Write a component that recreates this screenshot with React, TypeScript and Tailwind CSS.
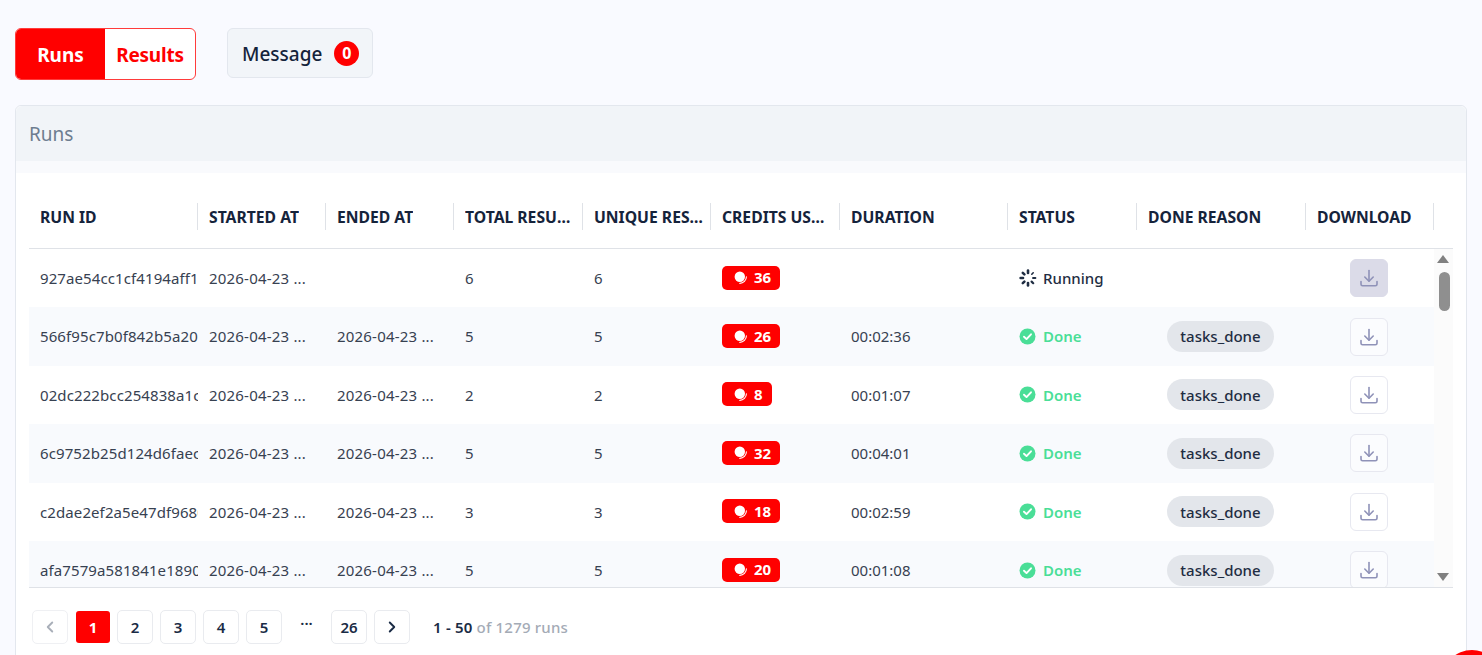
import { ChevronLeft, ChevronRight } from "lucide-react";

type Run = {
  id: string;
  started: string;
  ended?: string;
  total: number;
  unique: number;
  credits: number;
  duration?: string;
  running?: boolean;
};

const runs: Run[] = [
  { id: "927ae54cc1cf4194aff1", started: "2026-04-23 ...", total: 6, unique: 6, credits: 36, running: true },
  { id: "566f95c7b0f842b5a20", started: "2026-04-23 ...", ended: "2026-04-23 ...", total: 5, unique: 5, credits: 26, duration: "00:02:36" },
  { id: "02dc222bcc254838a1c", started: "2026-04-23 ...", ended: "2026-04-23 ...", total: 2, unique: 2, credits: 8, duration: "00:01:07" },
  { id: "6c9752b25d124d6faec", started: "2026-04-23 ...", ended: "2026-04-23 ...", total: 5, unique: 5, credits: 32, duration: "00:04:01" },
  { id: "c2dae2ef2a5e47df9680", started: "2026-04-23 ...", ended: "2026-04-23 ...", total: 3, unique: 3, credits: 18, duration: "00:02:59" },
  { id: "afa7579a581841e1890", started: "2026-04-23 ...", ended: "2026-04-23 ...", total: 5, unique: 5, credits: 20, duration: "00:01:08" },
];

const columns = [
  { label: "RUN ID", w: "w-[169px] pr-[6px]" },
  { label: "STARTED AT", w: "w-[128px] pr-[6px]" },
  { label: "ENDED AT", w: "w-[128px] pr-[6px]" },
  { label: "TOTAL RESULTS", w: "w-[129px] pr-[6px]" },
  { label: "UNIQUE RESULTS", w: "w-[128px] pr-[5.5px]" },
  { label: "CREDITS USED", w: "w-[129px] pr-[10px]" },
  { label: "DURATION", w: "w-[168px] pr-[6px]" },
  { label: "STATUS", w: "w-[129px] pr-[6px]" },
  { label: "DONE REASON", w: "w-[169px] pr-[6px]" },
  { label: "DOWNLOAD", w: "w-[128px] pr-[6px]" },
];

function CoinIcon() {
  return (
    <svg width="15" height="15" viewBox="0 0 15 15" className="shrink-0">
      <circle cx="6.8" cy="6.8" r="5.2" fill="#fff" />
      <path d="M13.4 6.8A6.6 6.6 0 0 1 6.8 13.4" fill="none" stroke="#fff" strokeWidth="1.1" strokeLinecap="round" />
    </svg>
  );
}

function SpinnerIcon() {
  return (
    <svg width="18" height="18" viewBox="0 0 18 18" fill="none" stroke="#1f2d42" strokeLinecap="round">
      <path d="M9 1.6v2.4" strokeWidth="2.6" />
      <path d="M14.2 3.8l-1.4 1.4" strokeWidth="1.6" />
      <path d="M16.4 9h-2.4" strokeWidth="1.9" />
      <path d="M14.2 14.2l-1.6-1.6" strokeWidth="2.2" />
      <path d="M9 16.4V14" strokeWidth="2.6" />
      <path d="M3.8 14.2l1.6-1.6" strokeWidth="2.6" />
      <path d="M1.6 9H4" strokeWidth="2.6" />
      <path d="M3.8 3.8l1.6 1.6" strokeWidth="2.6" />
    </svg>
  );
}

function CheckIcon() {
  return (
    <svg width="17" height="17" viewBox="0 0 17 17" className="shrink-0">
      <circle cx="8.5" cy="8.5" r="8" fill="#4ade97" />
      <path d="M5 8.7l2.5 2.4L12 6.3" fill="none" stroke="#fff" strokeWidth="1.9" strokeLinecap="round" strokeLinejoin="round" />
    </svg>
  );
}

function DownloadIcon() {
  return (
    <svg width="20" height="20" viewBox="0 0 20 20" fill="none" stroke="#8f92b8" strokeWidth="1.6" strokeLinecap="round" strokeLinejoin="round">
      <path d="M10 2.5v10.5" />
      <path d="M5.8 9l4.2 4.2L14.2 9" />
      <path d="M2 13.5v2.7a1.6 1.6 0 0 0 1.6 1.6h12.8a1.6 1.6 0 0 0 1.6-1.6v-2.7" />
    </svg>
  );
}

function PageButton({ children, active }: { children: React.ReactNode; active?: boolean }) {
  return (
    <button
      className={
        active
          ? "w-[34px] h-[32px] flex items-center justify-center rounded-[3px] bg-[#ff0000] text-white text-[15px] font-bold"
          : "w-[36px] h-[34px] flex items-center justify-center rounded-[5px] border border-[#e9ebef] bg-white text-[#1a2b45] text-[15px] font-semibold"
      }
    >
      {children}
    </button>
  );
}

function RunRow({ run, index }: { run: Run; index: number }) {
  return (
    <div className={`flex items-center h-[58.4px] shrink-0 text-[15px] text-[#374151] ${index % 2 === 1 ? "bg-[#f8fafd]" : "bg-white"}`}>
      <div className="w-[169px] pl-[11px] overflow-hidden whitespace-nowrap tracking-[0.1px]">{run.id}</div>
      <div className="w-[128px] pl-[11px] tracking-[0.2px]">{run.started}</div>
      <div className="w-[128px] pl-[11px] tracking-[0.2px]">{run.ended}</div>
      <div className="w-[129px] pl-[11px]">{run.total}</div>
      <div className="w-[128px] pl-[11px]">{run.unique}</div>
      <div className="w-[129px] pl-[11px]">
        <span className="inline-flex items-center gap-[6px] h-6 pl-[11px] pr-[9px] rounded-[5px] bg-[#ff0000] text-white font-bold">
          <CoinIcon />
          {run.credits}
        </span>
      </div>
      <div className="w-[168px] pl-[11px]">{run.duration}</div>
      <div className="w-[129px] pl-[11px]">
        {run.running ? (
          <span className="flex items-center gap-[6px] text-[15px] font-medium text-[#1f2d42]">
            <SpinnerIcon />
            Running
          </span>
        ) : (
          <span className="flex items-center gap-[7px] text-[15px] font-semibold text-[#4ade97]">
            <CheckIcon />
            Done
          </span>
        )}
      </div>
      <div className="w-[169px] flex justify-center pr-[2px]">
        {!run.running && (
          <span className="h-[31px] px-[13px] flex items-center rounded-full bg-[#e3e6eb] text-[15px] font-medium text-[#1f2d42]">tasks_done</span>
        )}
      </div>
      <div className="w-[128px] flex justify-center pr-[2px]">
        <button className={`w-[38px] h-[38px] flex items-center justify-center rounded-[6px] border ${run.running ? "bg-[#dbdbe8] border-[#dbdbe8]" : "bg-white/40 border-[#e7e8f0]"}`}>
          <DownloadIcon />
        </button>
      </div>
    </div>
  );
}

export default function App() {
  return (
    <div className="relative h-[655px] overflow-hidden bg-[#f9faff] px-[15px] pt-7 font-['Noto_Sans',sans-serif]">
      <div className="flex items-start">
        <div className="flex h-[52px] w-[181px] rounded-[6px] border border-[#ff3b3b] bg-white overflow-hidden text-[19px] font-bold">
          <div className="w-[89px] pt-[2px] flex items-center justify-center bg-[#ff0000] text-white">Runs</div>
          <div className="flex-1 pt-[2px] flex items-center justify-center text-[#ff0000] tracking-[-0.2px]">Results</div>
        </div>
        <div className="ml-[31px] flex items-center h-[50px] w-[146px] pl-[14px] gap-[12px] rounded-[6px] border border-[#e3e7ee] bg-[#f2f5f9] text-[#15233b] text-[19px] font-medium">
          <span className="pt-[2px]">Message</span>
          <span className="w-[25px] h-[25px] flex items-center justify-center rounded-full bg-[#ff0000] text-white text-base font-bold">0</span>
        </div>
      </div>

      <div className="mt-[25px] h-[600px] rounded-t-[6px] border border-[#e3e7ee] bg-white">
        <div className="h-[55px] pt-[2px] flex items-center pl-[13px] bg-[#f1f4f8] text-[19px] text-[#6d7d90] rounded-t-[6px]">Runs</div>
        <div className="h-3 bg-[#f9fafd]" />
        <div className="mx-[13px]">
          <div className="flex items-center h-[76px] border-b border-[#dfe2e7]">
            {columns.map((col) => (
              <div key={col.label} className={`${col.w} h-[27px] pl-[11px] pt-[2px] flex items-center border-r border-[#dfe2e7] mt-[12px]`}>
                <span className="truncate text-[15.7px] font-bold text-[#15233b]">{col.label}</span>
              </div>
            ))}
          </div>
          <div className="flex h-[339px] border-b border-[#dfe2e7]">
            <div className="w-[1405px] flex flex-col overflow-hidden">
              {runs.map((run, i) => (
                <RunRow key={run.id} run={run} index={i} />
              ))}
            </div>
            <div className="relative flex-1 bg-[#fbfbfb]">
              <svg width="14" height="10" viewBox="0 0 14 10" className="absolute left-[2px] top-[5px]">
                <path d="M7 1l6 8H1z" fill="#808080" />
              </svg>
              <div className="absolute left-[4.5px] top-[23px] w-[11px] h-[39px] rounded-full bg-[#8f8f8f]" />
              <svg width="14" height="10" viewBox="0 0 14 10" className="absolute left-[2px] bottom-[5px]">
                <path d="M7 9L1 1h12z" fill="#808080" />
              </svg>
            </div>
          </div>
          <div className="flex items-center h-[80px] pl-[3px] pb-[2px] text-[15px]">
            <button className="w-[36px] h-[34px] flex items-center justify-center rounded-[5px] border border-[#eff0f3] bg-white">
              <ChevronLeft size={18} strokeWidth={2.5} className="text-[#a9afb9]" />
            </button>
            <div className="ml-[8px]"><PageButton active>1</PageButton></div>
            <div className="ml-[7px]"><PageButton>2</PageButton></div>
            <div className="ml-[7px]"><PageButton>3</PageButton></div>
            <div className="ml-[7px]"><PageButton>4</PageButton></div>
            <div className="ml-[7px]"><PageButton>5</PageButton></div>
            <span className="w-[49px] text-center text-[#1a2b45] font-semibold -mt-2">···</span>
            <PageButton>26</PageButton>
            <button className="ml-[7px] w-[36px] h-[34px] flex items-center justify-center rounded-[5px] border border-[#e9ebef] bg-white">
              <ChevronRight size={18} strokeWidth={2.5} className="text-[#1a2b45]" />
            </button>
            <span className="ml-[23px] font-semibold text-[#1a2b45] tracking-[0.2px]">1 - 50</span>
            <span className="ml-1 font-medium text-[#a4abb6] tracking-[0.2px]">of 1279 runs</span>
          </div>
        </div>
      </div>

      <div className="absolute left-[1442px] top-[650px] w-[60px] h-[60px] rounded-full bg-[#ff0000]" />
    </div>
  );
}
